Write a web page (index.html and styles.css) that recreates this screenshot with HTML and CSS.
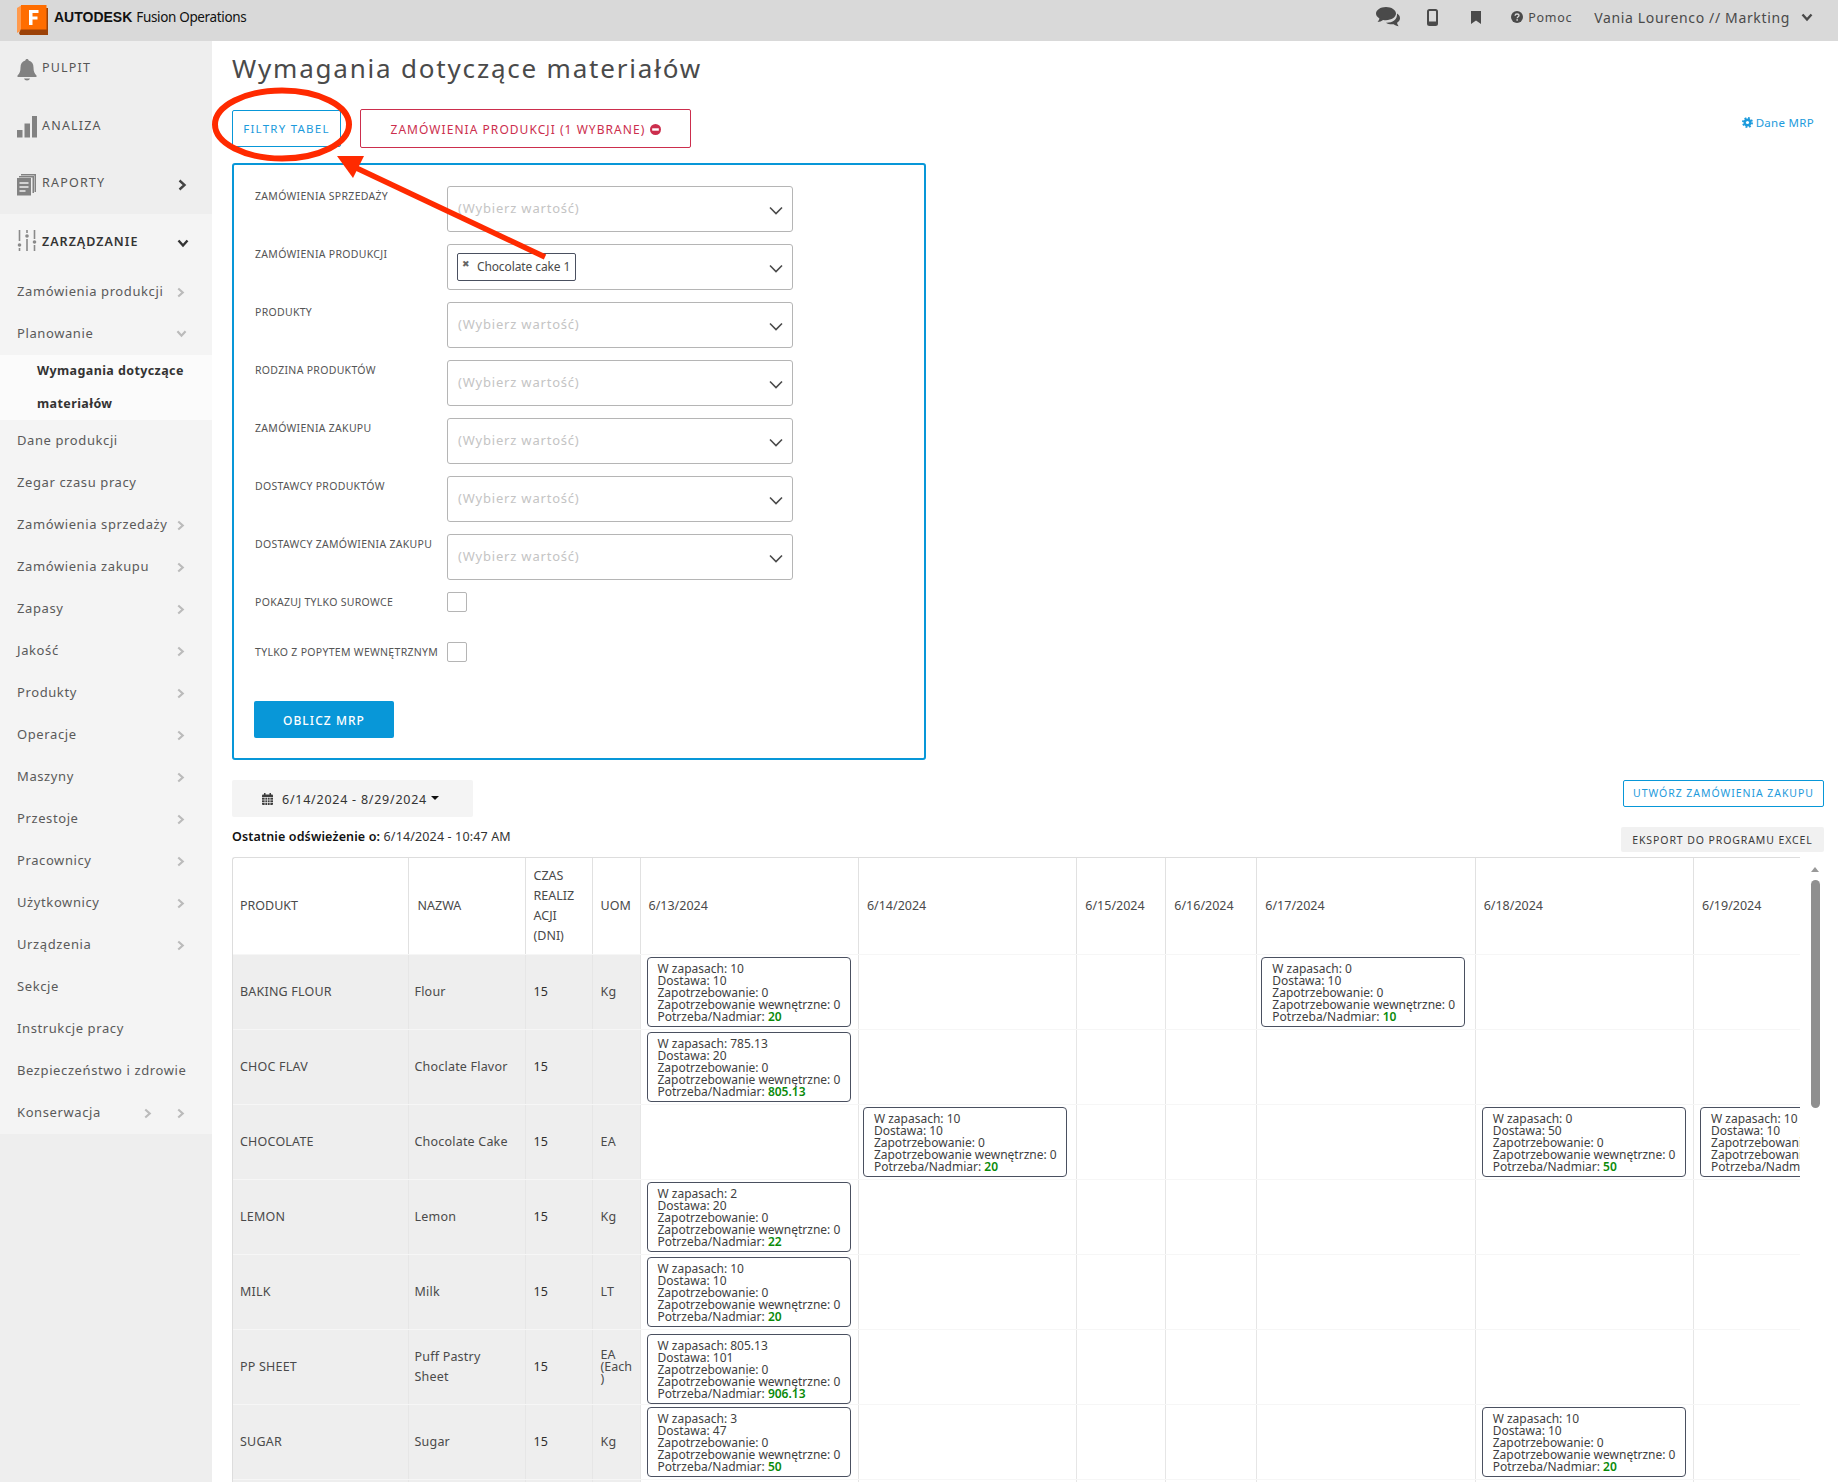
FILE: index.html
```html
<!DOCTYPE html>
<html lang="pl">

<head>
  <meta charset="UTF-8">
  <meta name="viewport" content="width=device-width, initial-scale=1.0">
  <title>Wymagania dotyczące materiałów</title>
  <link rel="stylesheet" href="styles.css">
</head>

<body>

  <!-- Shared icons -->
  <svg class="defs" width="0" height="0">
    <symbol id="chev-right" viewBox="0 0 10 12"><path d="M2.5 1.5 7.5 6l-5 4.5" fill="none" stroke="currentColor" stroke-width="2.4"/></symbol>
    <symbol id="chev-down" viewBox="0 0 12 10"><path d="M1.5 2.5 6 7.5l4.5-5" fill="none" stroke="currentColor" stroke-width="2.4"/></symbol>
    <symbol id="select-arrow" viewBox="0 0 14 9"><path d="M1 1.5 7 7.5l6-6" fill="none" stroke="currentColor" stroke-width="1.6"/></symbol>
  </svg>

  <!-- Header -->
  <header class="topbar">
    <div class="brand">
      <svg class="logo" width="32" height="30" viewBox="0 0 32 30">
        <path d="M1 3 6 0v25l-5 3z" fill="#ff9a4d"/>
        <path d="M3 28l2-4h27v6H4z" fill="#9c4208"/>
        <rect x="30" y="3" width="2" height="27" fill="#9c4208"/>
        <rect x="5" y="0" width="25.5" height="24.500" fill="#ff6d00"/>
        <path d="M13 5h9.500v3H16.500v3.500h5v3h-5V20H13z" fill="#fff"/>
      </svg>
      <span class="brand-name">AUTODESK</span>
      <span class="brand-product">Fusion Operations</span>
    </div>
    <div class="top-actions">
      <svg class="top-chat" width="24" height="20" viewBox="0 0 24 20">
        <path d="M10 0c5.500 0 10 2.900 10 6.600s-4.500 6.600-10 6.600c-1 0-2-.1-2.900-.3C5.600 14.200 3.500 14.800 1.500 15c1-1 1.700-2.200 1.900-3.500C1.300 10.200 0 8.500 0 6.600 0 2.900 4.500 0 10 0z" fill="#4a4a4a"/>
        <path d="M21 6.500c1.900 1.200 3 2.900 3 4.700 0 1.800-1.100 3.400-2.900 4.500.1 1.300.7 2.500 1.600 3.500-1.900-.2-3.700-.9-5-2-2.800.4-5.800-.1-7.800-1.500 5.800.3 11.600-2.300 11.100-9.200z" fill="#4a4a4a"/>
      </svg>
      <svg class="top-phone" width="11" height="17" viewBox="0 0 11 17">
        <rect x="1" y="1" width="9" height="15" rx="1.500" fill="none" stroke="#4a4a4a" stroke-width="2"/>
        <rect x="1" y="12.500" width="9" height="3.500" fill="#4a4a4a"/>
      </svg>
      <svg class="top-mark" width="10" height="13" viewBox="0 0 10 13"><path d="M0 0h10v13L5 9.500 0 13z" fill="#4a4a4a"/></svg>
      <span class="top-help">
        <svg width="12" height="12" viewBox="0 0 12 12">
          <circle cx="6" cy="6" r="6" fill="#4a4a4a"/>
          <path d="M4 4.700C4.100 3.500 5 3 6 3c1.200 0 2 .7 2 1.600C8 5.900 6.200 5.800 6.200 7.300" fill="none" stroke="#d9d9d9" stroke-width="1.300"/>
          <rect x="5.400" y="8.200" width="1.500" height="1.500" fill="#d9d9d9"/>
        </svg>
        Pomoc
      </span>
      <span class="top-user">Vania Lourenco // Markting</span>
      <svg class="top-chev" width="12" height="10"><use href="#chev-down"/></svg>
    </div>
  </header>

  <div class="layout">

    <!-- Sidebar -->
    <aside class="sidebar">
      <a class="nav-main">
        <svg class="nav-icon" width="20" height="22" viewBox="0 0 20 22">
          <path d="M10 0c1 0 1.600.6 1.700 1.500C15 2.300 16.500 5 16.500 8.500c0 4 1 6 3 8v1.500H.5v-1.500c2-2 3-4 3-8 0-3.500 1.500-6.200 4.800-7C8.400.6 9 0 10 0z" fill="#828282"/>
          <path d="M7 19.500h6c-.4 1.200-1.600 2-3 2s-2.600-.8-3-2z" fill="#828282"/>
        </svg>
        <span>PULPIT</span>
      </a>
      <a class="nav-main">
        <svg class="nav-icon" width="20" height="22" viewBox="0 0 20 22">
          <rect x="0" y="14" width="5.500" height="7.500" fill="#828282"/>
          <rect x="7.500" y="7.500" width="5.500" height="14" fill="#828282"/>
          <rect x="15" y="0" width="5.500" height="21.500" fill="#828282"/>
        </svg>
        <span>ANALIZA</span>
      </a>
      <a class="nav-main">
        <svg class="nav-icon" width="20" height="22" viewBox="0 0 20 22">
          <path d="M4 0h15v18h-1.500V1.500H4z" fill="#828282"/>
          <path d="M2 2h15v17h-1.500V3.500H2z" fill="#828282"/>
          <rect x="0" y="4" width="14" height="17.500" fill="#828282"/>
          <path d="M2.500 9h9M2.500 13h9M2.500 17h6" stroke="#eee" stroke-width="1.600"/>
        </svg>
        <span>RAPORTY</span>
        <svg class="nav-chev" width="10" height="12"><use href="#chev-right"/></svg>
      </a>

      <div class="nav-group">
        <a class="nav-main nav-open">
          <svg class="nav-icon" width="20" height="24" viewBox="0 0 20 24">
            <path d="M2.500 0v11M2.500 18v3M10 0v3M10 9v12M17.500 0v9M17.500 15v6" stroke="#8a8a8a" stroke-width="1.600"/>
            <circle cx="2.500" cy="15" r="1.800" fill="#8a8a8a"/>
            <circle cx="10" cy="6" r="1.800" fill="#8a8a8a"/>
            <circle cx="17.500" cy="12" r="1.800" fill="#8a8a8a"/>
          </svg>
          <span>ZARZĄDZANIE</span>
          <svg class="nav-chev nav-chev-down" width="12" height="10"><use href="#chev-down"/></svg>
        </a>
        <a class="nav-sub">Zamówienia produkcji <svg class="sub-chev" width="9" height="11"><use href="#chev-right"/></svg></a>
        <a class="nav-sub">Planowanie <svg class="sub-chev" width="11" height="9"><use href="#chev-down"/></svg></a>
        <a class="nav-active">Wymagania dotyczące materiałów</a>
        <a class="nav-sub">Dane produkcji</a>
        <a class="nav-sub">Zegar czasu pracy</a>
        <a class="nav-sub">Zamówienia sprzedaży <svg class="sub-chev" width="9" height="11"><use href="#chev-right"/></svg></a>
        <a class="nav-sub">Zamówienia zakupu <svg class="sub-chev" width="9" height="11"><use href="#chev-right"/></svg></a>
        <a class="nav-sub">Zapasy <svg class="sub-chev" width="9" height="11"><use href="#chev-right"/></svg></a>
        <a class="nav-sub">Jakość <svg class="sub-chev" width="9" height="11"><use href="#chev-right"/></svg></a>
        <a class="nav-sub">Produkty <svg class="sub-chev" width="9" height="11"><use href="#chev-right"/></svg></a>
        <a class="nav-sub">Operacje <svg class="sub-chev" width="9" height="11"><use href="#chev-right"/></svg></a>
        <a class="nav-sub">Maszyny <svg class="sub-chev" width="9" height="11"><use href="#chev-right"/></svg></a>
        <a class="nav-sub">Przestoje <svg class="sub-chev" width="9" height="11"><use href="#chev-right"/></svg></a>
        <a class="nav-sub">Pracownicy <svg class="sub-chev" width="9" height="11"><use href="#chev-right"/></svg></a>
        <a class="nav-sub">Użytkownicy <svg class="sub-chev" width="9" height="11"><use href="#chev-right"/></svg></a>
        <a class="nav-sub">Urządzenia <svg class="sub-chev" width="9" height="11"><use href="#chev-right"/></svg></a>
        <a class="nav-sub">Sekcje</a>
        <a class="nav-sub">Instrukcje pracy</a>
        <a class="nav-sub">Bezpieczeństwo i zdrowie</a>
        <a class="nav-sub">Konserwacja <svg class="sub-chev sub-chev-extra" width="9" height="11"><use href="#chev-right"/></svg><svg class="sub-chev" width="9" height="11"><use href="#chev-right"/></svg></a>
      </div>
    </aside>

    <!-- Main -->
    <main class="content">
      <h1 class="page-title">Wymagania dotyczące materiałów</h1>

      <div class="toolbar">
        <button class="btn btn-filter">FILTRY TABEL</button>
        <button class="btn btn-orders">ZAMÓWIENIA PRODUKCJI (1 WYBRANE)
          <svg width="11" height="11" viewBox="0 0 11 11"><circle cx="5.500" cy="5.500" r="5.500" fill="#cc2e4d"/><rect x="2.200" y="4.300" width="6.600" height="2.400" fill="#fff"/></svg>
        </button>
        <a class="mrp-link">
          <svg width="11" height="11" viewBox="0 0 12 12"><circle cx="6" cy="6" r="4.300" fill="#1d9bdc"/><circle cx="6" cy="6" r="5" fill="none" stroke="#1d9bdc" stroke-width="2" stroke-dasharray="2 1.930"/><circle cx="6" cy="6" r="1.700" fill="#fff"/></svg>
          Dane MRP
        </a>
      </div>

      <!-- Filters -->
      <form class="filters">
        <div class="field">
          <label>ZAMÓWIENIA SPRZEDAŻY</label>
          <div class="select"><span class="placeholder">(Wybierz wartość)</span><svg class="select-arrow" width="14" height="9"><use href="#select-arrow"/></svg></div>
        </div>
        <div class="field">
          <label>ZAMÓWIENIA PRODUKCJI</label>
          <div class="select"><span class="tag"><b class="tag-x">✖</b>Chocolate cake 1</span><svg class="select-arrow" width="14" height="9"><use href="#select-arrow"/></svg></div>
        </div>
        <div class="field">
          <label>PRODUKTY</label>
          <div class="select"><span class="placeholder">(Wybierz wartość)</span><svg class="select-arrow" width="14" height="9"><use href="#select-arrow"/></svg></div>
        </div>
        <div class="field">
          <label>RODZINA PRODUKTÓW</label>
          <div class="select"><span class="placeholder">(Wybierz wartość)</span><svg class="select-arrow" width="14" height="9"><use href="#select-arrow"/></svg></div>
        </div>
        <div class="field">
          <label>ZAMÓWIENIA ZAKUPU</label>
          <div class="select"><span class="placeholder">(Wybierz wartość)</span><svg class="select-arrow" width="14" height="9"><use href="#select-arrow"/></svg></div>
        </div>
        <div class="field">
          <label>DOSTAWCY PRODUKTÓW</label>
          <div class="select"><span class="placeholder">(Wybierz wartość)</span><svg class="select-arrow" width="14" height="9"><use href="#select-arrow"/></svg></div>
        </div>
        <div class="field">
          <label>DOSTAWCY ZAMÓWIENIA ZAKUPU</label>
          <div class="select"><span class="placeholder">(Wybierz wartość)</span><svg class="select-arrow" width="14" height="9"><use href="#select-arrow"/></svg></div>
        </div>
        <div class="field field-check">
          <label>POKAZUJ TYLKO SUROWCE</label>
          <span class="check"></span>
        </div>
        <div class="field field-check">
          <label>TYLKO Z POPYTEM WEWNĘTRZNYM</label>
          <span class="check"></span>
        </div>
        <button class="btn-run" type="button">OBLICZ MRP</button>
      </form>

      <div class="table-head">
        <div>
          <div class="date-pill">
            <svg width="11" height="12" viewBox="0 0 11 12"><rect y="1.500" width="11" height="10.500" rx="1" fill="#3d3d3d"/><path d="M0 4.500h11M0 7h11M0 9.500h11M3 4v8M5.500 4v8M8 4v8" stroke="#f4f4f4" stroke-width=".7"/><rect x="2" width="1.500" height="3" fill="#3d3d3d"/><rect x="7.500" width="1.500" height="3" fill="#3d3d3d"/></svg>
            <span>6/14/2024 - 8/29/2024</span>
            <i class="caret"></i>
          </div>
          <p class="refresh"><b>Ostatnie odświeżenie o:</b> 6/14/2024 - 10:47 AM</p>
        </div>
        <div class="table-actions">
          <button class="btn btn-create">UTWÓRZ ZAMÓWIENIA ZAKUPU</button>
          <button class="btn btn-export">EKSPORT DO PROGRAMU EXCEL</button>
        </div>
      </div>

      <!-- MRP table -->
      <div class="table-area">
        <div class="table-clip">
          <table class="mrp">
            <colgroup>
              <col class="c-prod"><col class="c-name"><col class="c-lead"><col class="c-uom">
              <col class="c-wide"><col class="c-wide"><col class="c-n1"><col class="c-n2">
              <col class="c-wide"><col class="c-wide"><col class="c-wide">
            </colgroup>
            <thead>
              <tr>
                <th class="th-prod">PRODUKT</th><th class="th-name">NAZWA</th><th class="th-lead">CZAS REALIZACJI (DNI)</th><th>UOM</th>
                <th>6/13/2024</th><th>6/14/2024</th><th>6/15/2024</th><th>6/16/2024</th>
                <th>6/17/2024</th><th>6/18/2024</th><th>6/19/2024</th>
              </tr>
            </thead>
            <tbody>
              <tr>
                <td class="fix code">BAKING FLOUR</td><td class="fix tight">Flour</td><td class="fix lead">15</td><td class="fix">Kg</td>
                <td><div class="card"><div>W zapasach: 10</div><div>Dostawa: 10</div><div>Zapotrzebowanie: 0</div><div>Zapotrzebowanie wewnętrzne: 0</div><div>Potrzeba/Nadmiar: <b>20</b></div></div></td>
                <td></td><td></td><td></td>
                <td><div class="card card-near"><div>W zapasach: 0</div><div>Dostawa: 10</div><div>Zapotrzebowanie: 0</div><div>Zapotrzebowanie wewnętrzne: 0</div><div>Potrzeba/Nadmiar: <b>10</b></div></div></td>
                <td></td><td></td>
              </tr>
              <tr>
                <td class="fix code">CHOC FLAV</td><td class="fix tight">Choclate Flavor</td><td class="fix lead">15</td><td class="fix"></td>
                <td><div class="card"><div>W zapasach: 785.13</div><div>Dostawa: 20</div><div>Zapotrzebowanie: 0</div><div>Zapotrzebowanie wewnętrzne: 0</div><div>Potrzeba/Nadmiar: <b>805.13</b></div></div></td>
                <td></td><td></td><td></td><td></td><td></td><td></td>
              </tr>
              <tr>
                <td class="fix code">CHOCOLATE</td><td class="fix tight">Chocolate Cake</td><td class="fix lead">15</td><td class="fix">EA</td>
                <td></td>
                <td><div class="card card-near"><div>W zapasach: 10</div><div>Dostawa: 10</div><div>Zapotrzebowanie: 0</div><div>Zapotrzebowanie wewnętrzne: 0</div><div>Potrzeba/Nadmiar: <b>20</b></div></div></td>
                <td></td><td></td><td></td>
                <td><div class="card"><div>W zapasach: 0</div><div>Dostawa: 50</div><div>Zapotrzebowanie: 0</div><div>Zapotrzebowanie wewnętrzne: 0</div><div>Potrzeba/Nadmiar: <b>50</b></div></div></td>
                <td><div class="card"><div>W zapasach: 10</div><div>Dostawa: 10</div><div>Zapotrzebowanie: 0</div><div>Zapotrzebowanie wewnętrzne: 0</div><div>Potrzeba/Nadmiar: <b>20</b></div></div></td>
              </tr>
              <tr>
                <td class="fix code">LEMON</td><td class="fix tight">Lemon</td><td class="fix lead">15</td><td class="fix">Kg</td>
                <td><div class="card"><div>W zapasach: 2</div><div>Dostawa: 20</div><div>Zapotrzebowanie: 0</div><div>Zapotrzebowanie wewnętrzne: 0</div><div>Potrzeba/Nadmiar: <b>22</b></div></div></td>
                <td></td><td></td><td></td><td></td><td></td><td></td>
              </tr>
              <tr>
                <td class="fix code">MILK</td><td class="fix tight">Milk</td><td class="fix lead">15</td><td class="fix">LT</td>
                <td><div class="card"><div>W zapasach: 10</div><div>Dostawa: 10</div><div>Zapotrzebowanie: 0</div><div>Zapotrzebowanie wewnętrzne: 0</div><div>Potrzeba/Nadmiar: <b>20</b></div></div></td>
                <td></td><td></td><td></td><td></td><td></td><td></td>
              </tr>
              <tr>
                <td class="fix code">PP SHEET</td><td class="fix tight">Puff Pastry Sheet</td><td class="fix lead">15</td><td class="fix uom-long">EA (Each)</td>
                <td><div class="card card-low"><div>W zapasach: 805.13</div><div>Dostawa: 101</div><div>Zapotrzebowanie: 0</div><div>Zapotrzebowanie wewnętrzne: 0</div><div>Potrzeba/Nadmiar: <b>906.13</b></div></div></td>
                <td></td><td></td><td></td><td></td><td></td><td></td>
              </tr>
              <tr>
                <td class="fix code">SUGAR</td><td class="fix tight">Sugar</td><td class="fix lead">15</td><td class="fix">Kg</td>
                <td><div class="card"><div>W zapasach: 3</div><div>Dostawa: 47</div><div>Zapotrzebowanie: 0</div><div>Zapotrzebowanie wewnętrzne: 0</div><div>Potrzeba/Nadmiar: <b>50</b></div></div></td>
                <td></td><td></td><td></td><td></td>
                <td><div class="card"><div>W zapasach: 10</div><div>Dostawa: 10</div><div>Zapotrzebowanie: 0</div><div>Zapotrzebowanie wewnętrzne: 0</div><div>Potrzeba/Nadmiar: <b>20</b></div></div></td>
                <td></td>
              </tr>
              <tr>
                <td class="fix"></td><td class="fix"></td><td class="fix"></td><td class="fix"></td>
                <td></td><td></td><td></td><td></td><td></td><td></td><td></td>
              </tr>
            </tbody>
          </table>
        </div>
        <div class="scrollbar">
          <i class="scroll-up"></i>
          <i class="scroll-thumb"></i>
        </div>
      </div>
    </main>
  </div>

  <!-- Red annotation drawn on top of the screenshot -->
  <svg class="annotation" width="600" height="300" viewBox="0 0 600 300">
    <ellipse cx="282" cy="124.500" rx="67" ry="34" fill="none" stroke="#ff2a00" stroke-width="6"/>
    <path d="M545 257 350 165" stroke="#ff2a00" stroke-width="5.500" fill="none"/>
    <path d="M337 156h27l-11 22z" fill="#ff2a00"/>
  </svg>

</body>

</html>
```

FILE: styles.css
```css
* {
  box-sizing: border-box;
}

html, body {
  height: 100%;
}

body {
  margin: 0;
  overflow: hidden;
  background: white;
  color: #4a4a4a;
  font-family: "Noto Sans", Arial, sans-serif;
  font-size: 13px;
}

.defs {
  position: absolute;
}

/* Top bar */
.topbar {
  height: 41px;
  background: #d9d9d9;
  display: flex;
  align-items: center;
  justify-content: space-between;
  padding: 0 25px 7px 16px;
}

.brand {
  display: flex;
  align-items: center;
  color: #111;
}

.logo {
  margin: 6px 6px 0 0;
}

.brand-name {
  font-family: "Liberation Sans", Arial, sans-serif;
  font-weight: bold;
  font-size: 14px;
  margin-right: 4px;
}

.brand-product {
  font-size: 13.500px;
  letter-spacing: -0.35px;
}

.top-actions {
  display: flex;
  align-items: center;
}

.top-chat {
  margin-right: 27px;
}

.top-phone {
  margin-right: 33px;
}

.top-mark {
  margin-right: 30px;
}

.top-help {
  display: flex;
  align-items: center;
  gap: 5px;
  font-size: 12.500px;
  letter-spacing: 0.7px;
  margin-right: 22px;
}

.top-user {
  font-size: 14px;
  letter-spacing: 0.65px;
  margin-right: 11px;
}

.top-chev {
  color: #4a4a4a;
}

.layout {
  display: flex;
  height: calc(100% - 41px);
}

/* Sidebar */
.sidebar {
  flex: 0 0 212px;
  background: #eee;
}

.nav-main {
  display: flex;
  align-items: center;
  height: 57.500px;
  padding: 0 17px;
  letter-spacing: 1.2px;
  font-size: 12.500px;
  color: #555;
  position: relative;
}

.nav-main span {
  margin-top: -4px;
}

.nav-open span {
  margin-top: -2px;
}

.nav-icon {
  margin-right: 5px;
  flex: none;
}

.nav-chev {
  position: absolute;
  left: 177px;
  top: 23px;
  color: #444;
}

.nav-chev-down {
  left: 177px;
  top: 24px;
  color: #333;
}

.nav-group {
  background: #f4f4f4;
}

.nav-open {
  font-weight: 600;
  color: #333;
  letter-spacing: 1px;
}

.nav-sub {
  display: block;
  height: 42px;
  line-height: 40px;
  padding-left: 17px;
  font-size: 13px;
  letter-spacing: 0.6px;
  color: #5a5a5a;
  white-space: nowrap;
  position: relative;
}

.sub-chev {
  position: absolute;
  left: 176px;
  top: 16px;
  color: #bbb;
}

.sub-chev-extra {
  left: 143px;
}

.nav-active {
  display: block;
  background: #fbfbfb;
  padding-left: 37px;
  padding-right: 10px;
  font-size: 12.500px;
  font-weight: 700;
  line-height: 32.500px;
  letter-spacing: 0.4px;
  color: #333;
}

/* Main */
.content {
  flex: 1;
  padding: 0 14px 0 20px;
  min-width: 0;
}

.page-title {
  margin: 0;
  padding-top: 9px;
  height: 68px;
  font-size: 26px;
  font-weight: 400;
  letter-spacing: 1.8px;
  color: #4a4a4a;
}

.toolbar {
  display: flex;
  align-items: flex-start;
  height: 54px;
}

.btn {
  background: white;
  border: 1px solid #0897d8;
  border-radius: 2px;
  color: #1d9bdc;
  font-family: inherit;
  font-size: 11.500px;
  letter-spacing: 1.250px;
  padding: 0;
}

.btn-filter {
  width: 109px;
  height: 37px;
  margin-top: 1px;
}

.btn-orders {
  width: 331px;
  height: 39px;
  margin-left: 19px;
  border-color: #cc2e4d;
  color: #cc2e4d;
  font-size: 12px;
  letter-spacing: 1.050px;
  padding-top: 2px;
}

.btn-orders svg {
  vertical-align: -1px;
}

.mrp-link {
  margin-left: auto;
  margin-right: 10px;
  margin-top: 6px;
  color: #1d9bdc;
  font-size: 11.500px;
  letter-spacing: 0.3px;
  display: flex;
  align-items: center;
  gap: 3px;
}

/* Filter panel */
.filters {
  width: 694px;
  height: 597px;
  border: 2px solid #0897d8;
  border-radius: 3px;
  padding: 21px 20px 0;
}

.field {
  display: flex;
  height: 46px;
  margin-bottom: 12px;
}

.field label {
  flex: 0 0 193px;
  padding: 2px 0 0 1px;
  font-size: 10.500px;
  line-height: 16px;
  letter-spacing: 0.3px;
  color: #555;
  white-space: nowrap;
}

.select {
  width: 346px;
  height: 46px;
  border: 1px solid #b5b5b5;
  border-radius: 3px;
  display: flex;
  align-items: center;
  padding: 0 9px 2px 10px;
  position: relative;
}

.placeholder {
  color: #c4c4c4;
  font-size: 13px;
  letter-spacing: 0.8px;
}

.select-arrow {
  position: absolute;
  right: 9px;
  top: 19px;
  color: #4a4a4a;
}

.tag {
  height: 28px;
  margin: 1px 0 0 -1px;
  border: 1px solid #4a5060;
  border-radius: 2px;
  display: flex;
  align-items: center;
  padding: 0 5px 0 4px;
  font-size: 12px;
  letter-spacing: -0.1px;
}

.tag-x {
  font-size: 9px;
  font-weight: normal;
  color: #666;
  margin: -6px 7px 0 0;
}

.field-check {
  height: 20px;
  margin-bottom: 30px;
  align-items: center;
}

.field-check label {
  padding-top: 0;
}

.check {
  width: 20px;
  height: 20px;
  border: 1px solid #b5b5b5;
  border-radius: 2px;
}

.btn-run {
  display: block;
  width: 140px;
  height: 37px;
  margin-top: 39px;
  padding-top: 2px;
  background: #0897d8;
  border: 0;
  border-radius: 2px;
  color: white;
  font-family: inherit;
  font-size: 12px;
  font-weight: 500;
  letter-spacing: 1.050px;
}

/* Above the table */
.table-head {
  display: flex;
  justify-content: space-between;
  height: 77px;
  margin-top: 20px;
}

.date-pill {
  width: 241px;
  height: 37px;
  background: #f4f4f4;
  border-radius: 2px;
  display: flex;
  align-items: center;
  padding: 1px 0 0 30px;
  gap: 9px;
  color: #333;
  font-size: 12.500px;
  letter-spacing: 0.75px;
}

.caret {
  border: 4px solid transparent;
  border-top-color: #111;
  border-bottom: 0;
  margin: -3px 0 0 -5px;
}

.refresh {
  margin: 11px 0 0;
  font-size: 12.500px;
  line-height: 18px;
  letter-spacing: 0.14px;
  color: #333;
}

.refresh b {
  font-weight: 600;
  color: #111;
}

.table-actions {
  display: flex;
  flex-direction: column;
  align-items: flex-end;
  gap: 20px;
}

.btn-create {
  width: 201px;
  height: 27px;
  padding-bottom: 2px;
  font-size: 10.500px;
  letter-spacing: 0.95px;
}

.btn-export {
  width: 203px;
  height: 25px;
  background: #f1f1f1;
  border: 0;
  color: #3a3a3a;
  font-size: 10.500px;
  letter-spacing: 0.9px;
}

/* MRP table */
.table-area {
  display: flex;
}

.table-clip {
  width: 1568px;
  height: 640px;
  overflow: hidden;
  border-top: 1px solid #ddd;
  border-left: 1px solid #ddd;
  border-top-left-radius: 3px;
}

.mrp {
  border-collapse: collapse;
  table-layout: fixed;
  width: 1679px;
}

.c-prod { width: 175px; }
.c-name { width: 117px; }
.c-lead { width: 67px; }
.c-uom { width: 48px; }
.c-wide { width: 218.400px; }
.c-n1 { width: 89px; }
.c-n2 { width: 91px; }

.mrp th {
  height: 96px;
  padding: 0 8px;
  border-right: 1px solid #e1e1e1;
  border-bottom: 1px solid #f6f6f6;
  font-size: 12.500px;
  font-weight: 400;
  line-height: 20px;
  text-align: left;
  color: #4a4a4a;
}

.mrp .th-prod {
  padding-left: 7px;
}

.mrp .th-name {
  padding-left: 9px;
}

.mrp .th-lead {
  padding-right: 12px;
  overflow-wrap: anywhere;
}

.mrp td {
  height: 75px;
  padding: 0 5px 0 6px;
  border-right: 1px solid #e6e6e6;
  border-bottom: 1px solid #f6f6f6;
  font-size: 12.500px;
  line-height: 20px;
  letter-spacing: 0.2px;
  overflow: visible;
}

.mrp .fix {
  background: #eee;
  border-bottom-color: #f6f6f6;
  padding: 0 8px;
}

.mrp .code {
  padding-left: 7px;
}

.mrp .lead {
  color: #2e2e2e;
}

.mrp .tight {
  padding: 0 8px 0 6px;
}

.mrp .uom-long {
  padding-right: 4px;
  line-height: 12px;
  letter-spacing: 0;
  overflow-wrap: anywhere;
}

.card {
  width: 204px;
  height: 70px;
  padding: 5px 7px 0 10px;
  border: 1px solid #4a5060;
  border-radius: 4px;
  font-size: 12px;
  line-height: 12px;
  letter-spacing: 0;
  white-space: nowrap;
  color: #3f3f3f;
}

.card-near {
  margin-left: -2px;
}

.card-low {
  margin-top: 4px;
}

.card b {
  color: #0a8a0a;
  font-weight: 600;
}

.scrollbar {
  flex: 0 0 24px;
  padding: 10px 0 0 11px;
}

.scroll-up {
  display: block;
  width: 0;
  border: 4px solid transparent;
  border-top: 0;
  border-bottom: 5px solid #999;
}

.scroll-thumb {
  display: block;
  width: 9px;
  height: 228px;
  margin-top: 8px;
  background: #8f8f8f;
  border-radius: 5px;
}

/* Annotation */
.annotation {
  position: absolute;
  left: 0;
  top: 0;
  pointer-events: none;
}
```
